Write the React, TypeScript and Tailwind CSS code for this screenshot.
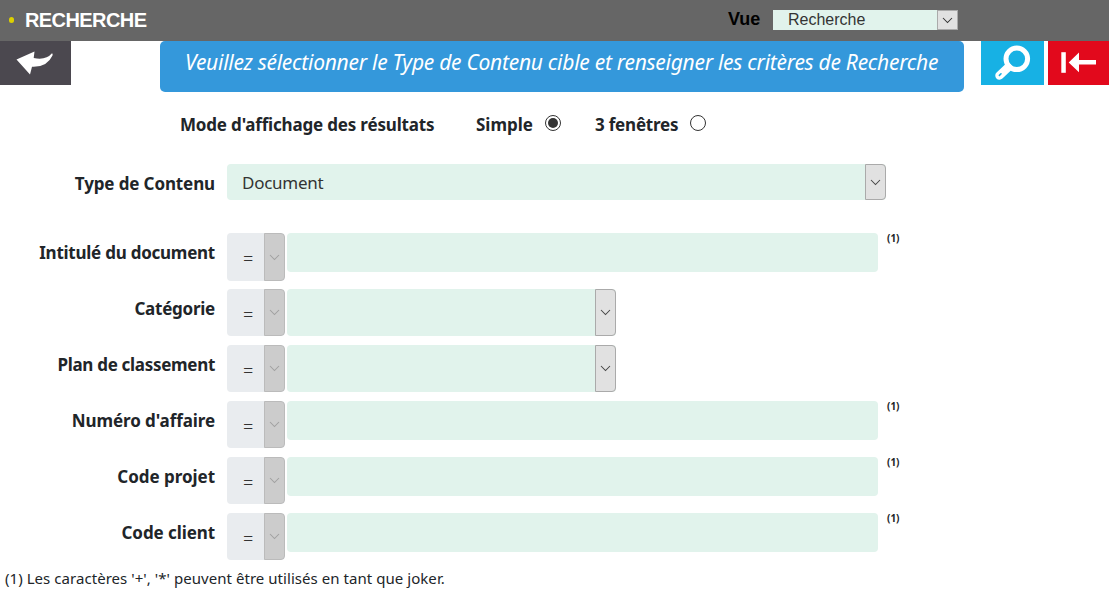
import React, { useState } from "react";

function Chevron({ className = "" }: { className?: string }) {
  return (
    <svg viewBox="0 0 11 7" className={`h-[7px] w-[11px] fill-none stroke-current ${className}`}>
      <path d="M1 1 L5.5 5.5 L10 1" strokeWidth="1.05" />
    </svg>
  );
}

function DropButton({ disabled = false }: { disabled?: boolean }) {
  return (
    <span
      className={`flex w-[21px] shrink-0 items-center justify-center rounded-r-[4px] border ${
        disabled
          ? "border-[#bbbbbb] bg-[#cccccc] text-[#a0a0a0]"
          : "border-[#aaaaaa] bg-[#e1e1e1] text-[#444444]"
      }`}
    >
      <Chevron />
    </span>
  );
}

function Radio({ checked, onClick }: { checked: boolean; onClick: () => void }) {
  return (
    <button
      type="button"
      role="radio"
      aria-checked={checked}
      onClick={onClick}
      className="flex size-4 items-center justify-center rounded-full border border-[#333333] bg-white"
    >
      {checked && <span className="size-[10px] rounded-full bg-[#333333]" />}
    </button>
  );
}

type Field = { label: string; kind: "text" | "select"; tracking: string };

const fields: Field[] = [
  { label: "Intitulé du document", kind: "text", tracking: "tracking-[-0.25px]" },
  { label: "Catégorie", kind: "select", tracking: "tracking-[-0.25px]" },
  { label: "Plan de classement", kind: "select", tracking: "tracking-[-0.3px]" },
  { label: "Numéro d'affaire", kind: "text", tracking: "tracking-[-0.08px]" },
  { label: "Code projet", kind: "text", tracking: "tracking-[-0.03px]" },
  { label: "Code client", kind: "text", tracking: "tracking-[-0.08px]" },
];

function FieldRow({ field, first }: { field: Field; first: boolean }) {
  return (
    <div className="flex h-14 items-start">
      <label className={`w-[215px] pt-[7px] text-right text-[17px] leading-[26px] font-bold ${field.tracking}`}>
        {field.label}
      </label>
      <div className={`ml-3 flex w-[58px] overflow-hidden rounded-[4px] bg-[#e9ecef] ${first ? "h-12" : "h-[47px]"}`}>
        <span className="flex-1 pt-[12px] pl-[16px] text-[18px] leading-[26px] font-light text-[#333333]">=</span>
        <DropButton disabled />
      </div>
      {field.kind === "text" ? (
        <>
          <div className="ml-[2px] h-[39px] w-[591px] rounded-[4px] bg-[#e1f3ec]" />
          <span className="ml-[9px] text-[10px] leading-[11px] font-bold">(1)</span>
        </>
      ) : (
        <div className="ml-[2px] flex h-[47px] w-[329px] justify-end rounded-[4px] bg-[#e1f3ec]">
          <DropButton />
        </div>
      )}
    </div>
  );
}

export default function App() {
  const [mode, setMode] = useState("simple");
  return (
    <div className="flex h-[594px] w-[1109px] flex-col overflow-hidden bg-white font-['Noto_Sans','Open_Sans',sans-serif] text-[#212529]">
      <header className="flex h-[41px] shrink-0 items-start bg-[#666666] font-['Liberation_Sans',Arial,sans-serif]">
        <span className="mt-[17px] ml-[9px] h-[6px] w-[5px] rounded-full bg-[#dcd000]" />
        <h1 className="mt-[8px] ml-[11px] w-[703px] text-[20px] leading-[24px] font-bold tracking-[-0.58px] text-white">
          RECHERCHE
        </h1>
        <span className="mt-[8px] w-[45px] text-[18px] leading-[22px] font-bold tracking-[-0.1px] text-black">Vue</span>
        <div className="mt-[10px] flex h-5 w-[185px] bg-[#e1f3ec] text-[16px] leading-[19px] text-[#333333]">
          <span className="flex-1 pl-[15px]">Recherche</span>
          <span className="flex w-[21px] items-center justify-center border border-[#aaaaaa] bg-[#e1e1e1]">
            <Chevron />
          </span>
        </div>
      </header>

      <div className="flex h-[51px] shrink-0 items-start">
        <button type="button" aria-label="Retour" className="h-11 w-[71px] bg-[#4b484f]">
          <svg viewBox="0 0 71 44" className="h-11 w-[71px]">
            <path
              d="M16.5 18.5 L34.5 10.5 L33.7 17 Q46 19.5 52 12.3 Q53 12.5 52.5 14.5 Q47 26.5 32 25.8 L30 33.5 Z"
              fill="#fff"
            />
          </svg>
        </button>
        <div className="ml-[89px] h-[51px] w-[804px] rounded-[5px] bg-[#3498db] pt-[7px] pl-[25px] text-[21px] leading-[28px] whitespace-nowrap text-white italic">
          <span className="tracking-[-0.27px]">
            Veuillez sélectionner le Type de Contenu cible et renseigner les critères de Recherche
          </span>
        </div>
        <button type="button" aria-label="Rechercher" className="ml-[17px] h-11 w-[63px] bg-[#17b1e4]">
          <svg viewBox="0 0 63 44" className="h-11 w-[63px]" fill="none" stroke="#fff" strokeLinecap="round">
            <circle cx="35.8" cy="17.8" r="10.8" strokeWidth="5" />
            <path d="M27 26.5 L18.5 34.5" strokeWidth="8.5" />
            <path d="M20 32.8 L18.4 34.4" stroke="#17b1e4" strokeWidth="1.6" />
          </svg>
        </button>
        <button type="button" aria-label="Quitter" className="ml-1 h-11 w-[61px] bg-[#e2091c]">
          <svg viewBox="0 0 61 44" className="h-11 w-[61px]" fill="#fff">
            <rect x="13.3" y="11.2" width="4.5" height="20.6" />
            <path d="M20.7 21.4 L31 11.5 V19.1 H48 V23.5 H31 V31.3 Z" />
          </svg>
        </button>
      </div>

      <div className="flex h-[72px] shrink-0 items-start pt-[19px] pl-[180px] text-[17px] leading-[28px] font-bold whitespace-nowrap">
        <span className="w-[296px] tracking-[-0.18px]">Mode d'affichage des résultats</span>
        <span className="w-[69px] tracking-[-0.02px]">Simple</span>
        <div className="pt-1">
          <Radio checked={mode === "simple"} onClick={() => setMode("simple")} />
        </div>
        <span className="ml-[34px] w-[95px] tracking-[-0.2px]">3 fenêtres</span>
        <div className="pt-1">
          <Radio checked={mode === "windows"} onClick={() => setMode("windows")} />
        </div>
      </div>

      <div className="flex h-[69px] shrink-0 items-start">
        <label className="w-[215px] pt-[7px] text-right text-[17px] leading-[26px] font-bold tracking-[-0.12px]">
          Type de Contenu
        </label>
        <div className="ml-3 flex h-9 w-[659px] rounded-[4px] bg-[#e1f3ec]">
          <span className="flex-1 pt-[6px] pl-[15px] text-[17px] leading-[26px] tracking-[-0.25px] text-[#333333]">
            Document
          </span>
          <DropButton />
        </div>
      </div>

      {fields.map((f, i) => (
        <FieldRow key={f.label} field={f} first={i === 0} />
      ))}

      <p className="-mt-px pl-[5px] text-[15px] leading-[20px] whitespace-nowrap">
        <span className="tracking-[0.05px]">(1) Les caractères '+', '*' peuvent être utilisés en tant que joker.</span>
      </p>
    </div>
  );
}
